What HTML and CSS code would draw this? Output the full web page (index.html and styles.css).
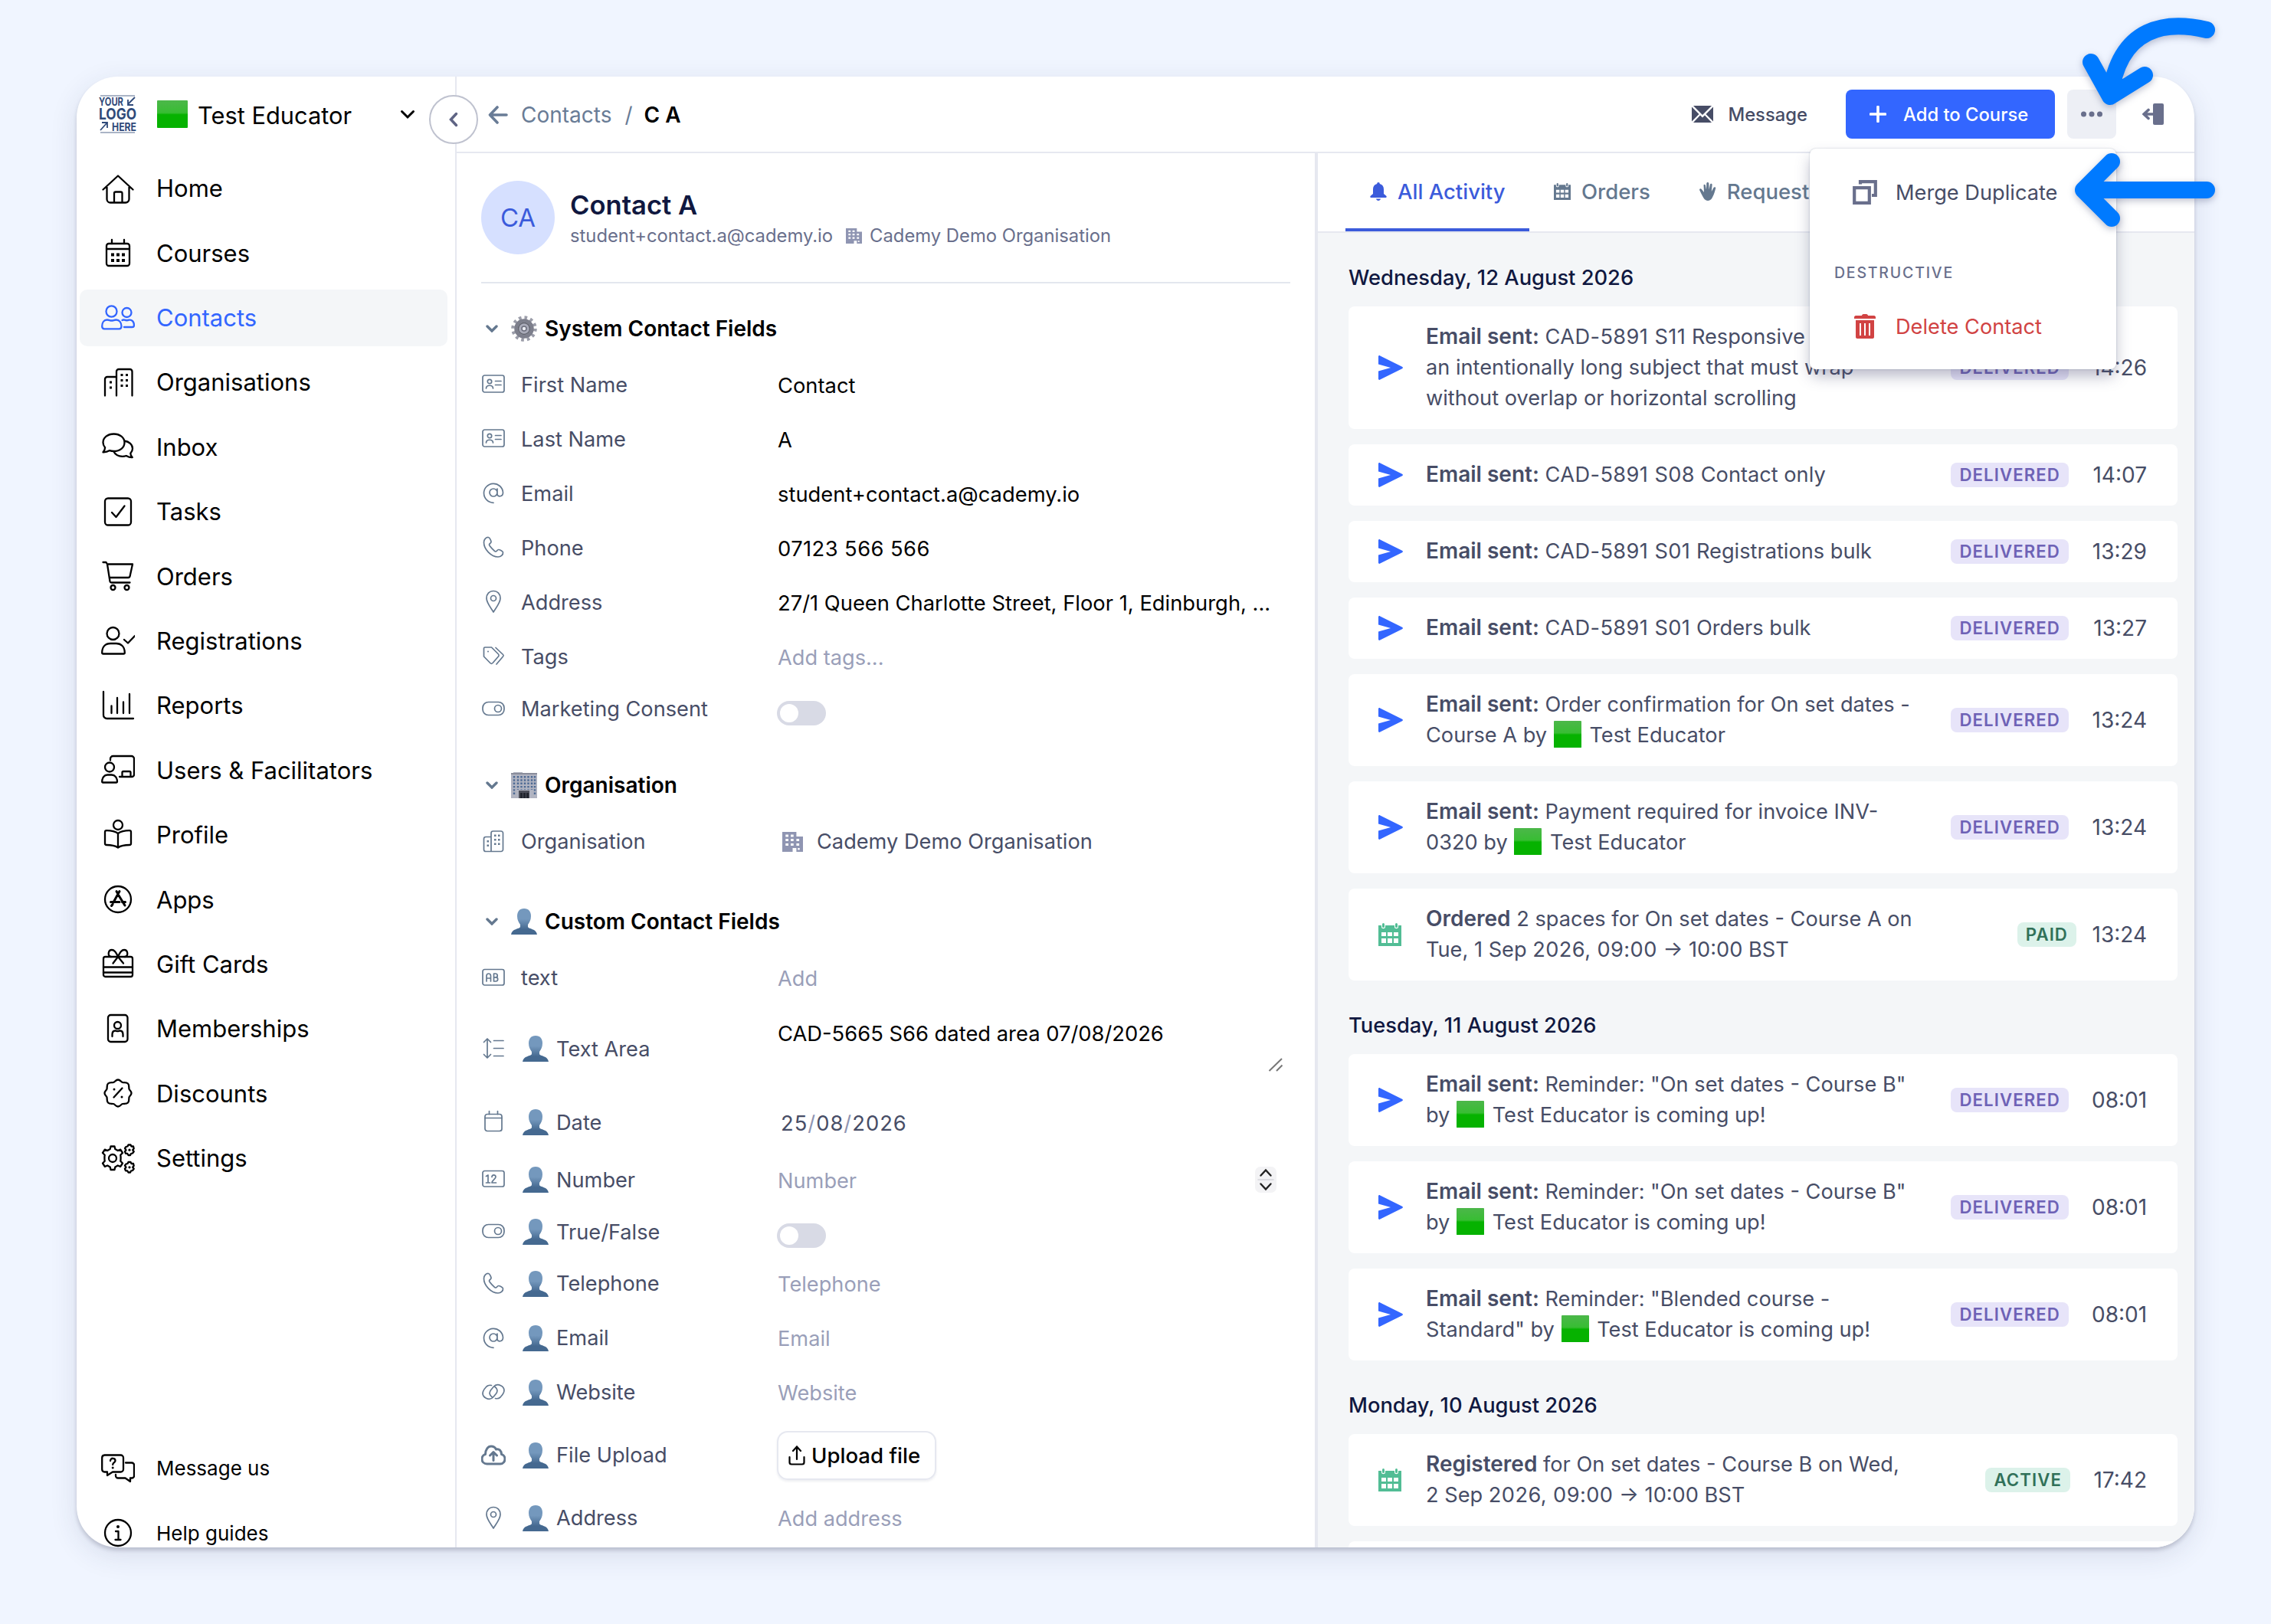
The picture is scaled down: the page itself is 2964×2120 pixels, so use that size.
FILE: index.html
```
<!DOCTYPE html>
<html lang="en">
<head>
    <meta charset="UTF-8">
    <meta name="viewport" content="width=device-width, initial-scale=1.0">
    <title>Contact A - Test Educator</title>
    <link rel="stylesheet" href="styles.css">
</head>
<body>
    <!-- Icon sprite -->
    <svg class="sprite" aria-hidden="true">
        <defs>
            <linearGradient id="green" x1="0" y1="0" x2="0" y2="1">
                <stop offset="0" stop-color="#4cb74a"/>
                <stop offset="0.45" stop-color="#38bd33"/>
                <stop offset="0.52" stop-color="#06b200"/>
                <stop offset="1" stop-color="#06b200"/>
            </linearGradient>
            <linearGradient id="blue" x1="0" y1="0" x2="0" y2="1">
                <stop offset="0.4" stop-color="#7498bd"/>
                <stop offset="0.8" stop-color="#456990"/>
            </linearGradient>
        </defs>

        <!-- Emoji -->
        <symbol id="e-square" viewBox="0 0 40 40" preserveAspectRatio="none"><rect width="40" height="40" rx="1" fill="url(#green)"/></symbol>
        <symbol id="e-person" viewBox="0 0 34 34">
            <path fill="url(#blue)" d="M17 0c6 0 9 4 9 10 0 5-2 8-4 11v3c1 3 11 2 12 10H0c1-8 11-7 12-10v-3c-2-3-4-6-4-11C8 4 11 0 17 0z"/>
        </symbol>
        <symbol id="e-gear" viewBox="0 0 34 34">
            <circle cx="17" cy="17" r="14.500" fill="none" stroke="#9b9da9" stroke-width="4.500" stroke-dasharray="3.600 4"/>
            <circle cx="17" cy="17" r="10.500" fill="#c3c5d0" stroke="#7d7f8c" stroke-width="4.500"/>
            <circle cx="17" cy="17" r="7.500" fill="#a9abb9" stroke="#62646f" stroke-width="1.500"/>
            <circle cx="17" cy="17" r="3" fill="#eceef4" stroke="#6b6d7b" stroke-width="1.500"/>
        </symbol>
        <symbol id="e-building" viewBox="0 0 34 34">
            <path fill="#b1b4c1" d="M3 0h12v1h19v33H0V1h3z"/>
            <path fill="#8a8d9b" d="M0 1h34v2H0z"/>
            <path stroke="#4e6a94" stroke-width="2.400" stroke-dasharray="2.400 1.900" d="M4 5v25M9 5v18M13.500 5v18M18 5v18M22.500 5v18M27 5v18M31 5v25"/>
            <path fill="#4c4e59" d="M10 24h14v10H10z"/>
            <path fill="#22252e" d="M12 27h3v7h-3zM16 27h3v7h-3zM20 27h3v7h-3z"/>
        </symbol>

        <!-- Sidebar icons -->
        <symbol id="i-home" viewBox="0 0 44 44"><path d="M2.500 23.500 22 5.500l19.500 18M7.500 20v16a4.500 4.500 0 0 0 4.500 4.500h20a4.500 4.500 0 0 0 4.500-4.500V20M17 40V28.500a2 2 0 0 1 2-2h6.500a2 2 0 0 1 2 2V40"/></symbol>
        <symbol id="i-courses" viewBox="0 0 44 44"><rect x="7" y="10" width="30" height="29" rx="3"/><path d="M7 17h30M14 5v5M30 5v5"/><path class="solid" d="M13 22.500h4v4h-4zM20 22.500h4v4h-4zM27 22.500h4v4h-4zM13 30h4v4h-4zM20 30h4v4h-4zM27 30h4v4h-4z"/></symbol>
        <symbol id="i-contacts" viewBox="0 0 44 44"><ellipse cx="13.500" cy="13.500" rx="7" ry="7.200"/><ellipse cx="33.500" cy="15" rx="6" ry="6"/><path d="M1.200 33c0-5 2.500-8.500 6.500-8.500 3 0 3.500 1 6 1s3-1 6-1c4 0 6.800 3.500 6.800 8.500 0 2-1 3.300-3 3.300H4.200c-2 0-3-1.300-3-3.300zM27.500 25c1-.6 2-.6 3-.3 2 .7 4 .7 6 0 3.500-.8 6.500 2.300 6.500 7 0 1.500-1 2.300-2.500 2.300H30"/></symbol>
        <symbol id="i-orgs" viewBox="0 0 44 44"><path d="M20 39.500V8a3 3 0 0 1 3-3h14.500a3 3 0 0 1 3 3v31.500M5 39.500V18a3 3 0 0 1 3-3h12"/><path class="solid" d="M25.500 11h3v3h-3zM32 11h3v3h-3zM25.500 18h3v3h-3zM32 18h3v3h-3zM25.500 25h3v3h-3zM32 25h3v3h-3zM11 20.500h3v3h-3zM11 27.500h3v3h-3z"/></symbol>
        <symbol id="i-inbox" viewBox="0 0 44 44"><path d="M16.500 5.500c8 0 14 4.800 14 11.300S24.500 28 16.500 28c-2 0-3.800-.3-5.300-.9-2.500 1.500-5.700 2.400-8.700 2.200 1.600-1.800 2.600-4 2.600-6-1.700-2-2.600-4-2.600-6.500 0-6.500 6-11.300 14-11.300zM30.500 14.500c6 1 10.500 4.800 10.500 10 0 2.500-1 4.600-2.700 6.300 0 2 .8 3.700 2.500 5.200-3 .2-5.500-.6-8-2-1.500.5-3.200.8-5 .8-5.500 0-9.500-2.500-11.500-6.500"/></symbol>
        <symbol id="i-tasks" viewBox="0 0 44 44"><rect x="5" y="4.500" width="34" height="35" rx="4"/><path d="m14 23 5.500 6 11-14.500"/></symbol>
        <symbol id="i-orders" viewBox="0 0 44 44"><path d="M2.500 4h4l1.500 2.500h33l-3.500 16c-.4 1-1 1.500-2 1.500H11.500M8 6.500 11.500 29c.2 1 .8 1.500 2 1.500h24"/><circle cx="15.500" cy="37" r="3"/><circle cx="33.500" cy="37" r="3"/></symbol>
        <symbol id="i-regs" viewBox="0 0 44 44"><ellipse cx="15.500" cy="12" rx="8" ry="8"/><path d="M1.200 37c0-8 4.500-12 11-12h7.600c6 0 11 4 11 12 0 1-.6 1.500-1.600 1.500H2.800c-1 0-1.600-.5-1.600-1.500zM30 20l5 4.500 9-9.500"/></symbol>
        <symbol id="i-reports" viewBox="0 0 44 44"><path d="M3 4v30.500a4.500 4.500 0 0 0 4.500 4.500H42M13.500 22.500V32M21 12v20M29 17.500V32M37 7v25"/></symbol>
        <symbol id="i-users" viewBox="0 0 44 44"><path d="M12 9.500V7.500a3.500 3.500 0 0 1 3.500-3.500h24a3.500 3.500 0 0 1 3.500 3.500V28a3 3 0 0 1-3 3H24M27.500 31v-5.500a1.500 1.500 0 0 1 1.500-1.500h8a1.500 1.500 0 0 1 1.500 1.500V31"/><circle cx="11" cy="18.500" r="6"/><path d="M1.200 37.500c0-5.500 3-9 7-9h5.600c4 0 7.200 3.500 7.200 9 0 .6-.4 1-1 1H2.200c-.6 0-1-.4-1-1z"/></symbol>
        <symbol id="i-profile" viewBox="0 0 44 44"><circle cx="22" cy="9" r="6"/><path d="M22 20c-4-3-9-3.800-15-3.800a2 2 0 0 0-2 2V33a2 2 0 0 0 2 2c6 0 11 .8 15 3.500 4-2.700 9-3.500 15-3.500a2 2 0 0 0 2-2V18.200a2 2 0 0 0-2-2c-6 0-11 .8-15 3.800zM22 20v18"/></symbol>
        <symbol id="i-apps" viewBox="0 0 44 44"><circle cx="22" cy="22" r="17"/><path class="thick" d="M22 15 16 26M24 11.500 22 15M20 11.500 22 15M23 17l8 13M12.500 25.500H24M27.500 25.500h4M15 28.500 13.500 30.500"/></symbol>
        <symbol id="i-gift" viewBox="0 0 44 44"><path d="M22 13c-2-5-4-9-8-9-5 0-6 8-1 9M22 13c2-5 4-9 8-9 5 0 6 8 1 9M22 13l-6.500 8.500M22 13l7 8.500M3 26.500h38M3 33.500h38"/><rect x="3" y="13" width="38" height="26" rx="2.500"/></symbol>
        <symbol id="i-members" viewBox="0 0 44 44"><rect x="9" y="4" width="25.500" height="35" rx="3.500"/><circle cx="21.500" cy="17.500" r="4.500"/><path d="M14.500 32v-2.500c0-3 1.500-5 4-5 1.500 0 1.500.7 3 .7s1.500-.7 3-.7c2.500 0 4 2 4 5V32"/></symbol>
        <symbol id="i-discounts" viewBox="0 0 44 44"><path d="M22 4.500c3 0 4 3 6 3.500s5-.5 7 1.500 1 5 1.500 7S39.500 19 39.500 22s-2.500 3.500-3 5.500.5 5-1.500 7-5 1-7 1.500-3 3.500-6 3.500-4-3-6-3.500-5 .5-7-1.500-1-5-1.500-7-3-2.500-3-5.500 2.500-3.500 3-5.500-.5-5 1.500-7 5-1 7-1.500 3-3.500 6-3.500zM16.500 27.500l11-12"/><circle class="solid" cx="17" cy="17" r="1.500"/><circle class="solid" cx="27" cy="27" r="1.500"/></symbol>
        <symbol id="i-settings" viewBox="0 0 44 44"><path d="M12.500 6.500h5l.8 3.600 3.400 1.900 3.500-1.300 2.800 4.300-2.700 2.700c.4 2.800.4 5.200 0 8l2.700 2.800-2.800 4.300-3.500-1.300-3.400 1.900-.8 3.600h-5l-.8-3.600-3.400-1.900-3.500 1.300-2.800-4.300 2.700-2.800c-.4-2.800-.4-5.200 0-8l-2.700-2.700 2.800-4.300 3.500 1.300 3.400-1.900z"/><circle cx="15" cy="22" r="5"/><path d="M35.500 4.500h3l1 2h2.500l.7 2.700-1.500 2 1.500 2L41 15.500l-2 .5-1 2h-2.500l-1.200-2-2.300-.3-1-2.400 1.500-2-1.500-2.300 1.500-2 2-.5zM35.500 27h3l1 2h2.500l.7 2.700-1.500 2 1.500 2L41 38l-2 .5-1 2h-2.500l-1.200-2-2.300-.3-1-2.400 1.500-2-1.500-2.300 1.500-2 2-.5z"/><circle class="solid" cx="37" cy="11.200" r="1.600"/><circle class="solid" cx="37" cy="33.800" r="1.600"/></symbol>
        <symbol id="i-message" viewBox="0 0 44 44"><path d="M4.500 4.500h21a3.500 3.500 0 0 1 3.500 3.500v15a3.500 3.500 0 0 1-3.500 3.500H15l-7 4.500v-4.500H4.500A3.500 3.500 0 0 1 1.200 23V8a3.500 3.500 0 0 1 3.300-3.500zM32 14.500h8a3 3 0 0 1 3 3v14a3 3 0 0 1-3 3h-2v4.500l-6.500-4.500H22a3 3 0 0 1-3-3V30M12 12c0-4.500 6.500-4 6.500-.3 0 2.300-3.300 2.500-3.300 5.300"/><circle class="solid" cx="15.200" cy="21" r="1.500"/></symbol>
        <symbol id="i-info" viewBox="0 0 44 44"><circle cx="22" cy="22" r="17"/><path d="M19 20h3.500v11M18.500 31h7"/><circle class="solid" cx="22" cy="14" r="2"/></symbol>

        <!-- Field icons -->
        <symbol id="f-card" viewBox="0 0 32 32"><rect x="2" y="5" width="28" height="22" rx="2.500"/><circle cx="11" cy="13" r="2.700"/><path d="M6.500 22c0-5 9-5 9 0M18.500 12.500H26M18.500 17.500H26"/></symbol>
        <symbol id="f-at" viewBox="0 0 32 32"><path d="M21 16a5 5 0 1 1-10 0 5 5 0 0 1 10 0zm0-5v7c0 4 7.500 4 7.500-2A12.500 12.500 0 1 0 16 29.300"/></symbol>
        <symbol id="f-phone" viewBox="0 0 32 32"><path d="M9.500 3.500c-3-.3-6 2.500-6 6.500 0 9 9.500 19 18.500 19 4 0 6.800-3 6.500-6-.2-1.500-4-3.500-6-3.500-1.500 0-2 2.500-3.500 2.500S10.500 14.500 10.500 13s2.500-2 2.500-3.500c0-2-2-5.800-3.500-6z"/></symbol>
        <symbol id="f-pin" viewBox="0 0 32 32"><path d="M16 2.500c5.500 0 9 4 9 9.500 0 6-5.500 12-9 18-3.500-6-9-12-9-18 0-5.500 3.500-9.500 9-9.500z"/><circle cx="16" cy="12" r="3.500"/></symbol>
        <symbol id="f-tags" viewBox="0 0 32 32"><path d="M5 5h8.500l8.500 8.500c1.500 1.500 1.500 2.500 0 4L15 25.500c-1.200 1.200-2 1.200-3.200 0L3.500 17V6.500C3.500 5.500 4 5 5 5zM19 5.500l9.500 9c1 1 1 1.500 0 2.500L20 27"/><circle class="solid" cx="9" cy="10.500" r="1"/></symbol>
        <symbol id="f-toggle" viewBox="0 0 32 32"><rect x="2" y="7.500" width="28" height="17" rx="7.500"/><circle cx="22" cy="16" r="4.500"/></symbol>
        <symbol id="f-org" viewBox="0 0 32 32"><path d="M13 29.500V5.500a2.500 2.500 0 0 1 2.500-2.500H26a2.500 2.500 0 0 1 2.500 2.500v21.500a2.500 2.500 0 0 1-2.500 2.500H6A2.500 2.500 0 0 1 3.500 27V13A2.500 2.500 0 0 1 6 10.500h7"/><path class="solid" d="M17 7.500h2.500v2.500H17zM22 7.500h2.500v2.500H22zM17 13h2.500v2.500H17zM22 13h2.500v2.500H22zM17 18.500h2.500v2.500H17zM22 18.500h2.500v2.500H22zM7.500 15H10v2.500H7.500zM7.500 20.500H10v2.500H7.500z"/></symbol>
        <symbol id="f-text" viewBox="0 0 32 32"><rect x="2" y="5.500" width="28" height="20.500" rx="2.500"/><path d="M7 21v-7c0-4 5.500-4 5.500 0v7M7 17h5.500M16.500 11v10h2.500c3.500 0 3.500-5 .5-5.200 2.500-.3 2.300-4.800-.7-4.800zM16.500 15.800h3"/></symbol>
        <symbol id="f-number" viewBox="0 0 32 32"><rect x="2" y="5.500" width="28" height="20.500" rx="2.500"/><path d="M6.500 12.500 9 11v10M6.500 21h5M14 13.500c0-3.500 5-3.300 5-.3 0 3-5 4.300-5 7.800h5.500"/></symbol>
        <symbol id="f-area" viewBox="0 0 32 32"><path d="M8 4.500v24M3.500 8.500l4.500-4.500 4.500 4.500M3.500 24.500l4.500 4.500 4.500-4.500M16.500 6.500h12.500M16.500 16.500h12.500M16.500 26.500h12.500"/></symbol>
        <symbol id="f-date" viewBox="0 0 32 32"><rect x="5" y="6.500" width="22" height="22" rx="3"/><path d="M5 11.500h22M10.500 2.500v4M21.500 2.500v4"/></symbol>
        <symbol id="f-link" viewBox="0 0 32 32"><path d="M14 22.500c-3-2-4-5.500-1.500-8.800l3.500-4.200c5-6 16-1 13.500 7-.7 2-2.500 4.500-4.500 6.500-2 1.800-4.500 2-6.500 1.500M18 9.500c3 2 4 5.500 1.500 8.800L16 22.500c-5 6-16 1-13.500-7C3.200 13.500 5 11 7 9c2-1.800 4.500-2 6.500-1.500"/></symbol>
        <symbol id="f-cloud" viewBox="0 0 32 32"><path class="thick" d="M7.500 28c-4 0-6.500-3-6.500-6.500 0-3 2-5.500 4.500-6C5.500 9 9 5 13 5c3 0 5.300 1.500 6.500 4 4-1 7 2 7 6.500 2.500.5 4.500 3 4.500 6S29 28 25 28zM16 23.500V13M11.500 17l4.500-4.500 4.500 4.500"/></symbol>

        <!-- Solid icons -->
        <symbol id="s-building" viewBox="2 0 22 26" preserveAspectRatio="none"><path d="M2 0h15v6h7v20h-7v-5h-4v5H2zm3.500 3.500v3h3v-3zm5.500 0v3h3v-3zM5.500 9v3h3V9zm5.500 0v3h3V9zm6 0v3h3V9zM5.500 15v3h3v-3zm5.500 0v3h3v-3zm6 0v3h3v-3zM18.500 21v2.500h2V21z" fill-rule="evenodd"/></symbol>
        <symbol id="s-send" viewBox="0 0 32 32"><path d="M0 1.500C0 .3 1.200-.3 2.300.4L31 14.700c1.200.7 1.200 1.900 0 2.600L2.300 31.600C1.200 32.300 0 31.700 0 30.500V20.500L16 16 0 11.500z"/></symbol>
        <symbol id="s-calendar" viewBox="0 0 30 30"><path fill-rule="evenodd" d="M0 3h4v2c0 3 5 3 5 0V3h12v2c0 3 5 3 5 0V3h4v27H0zm4 9v5h6v-5zm8 0v5h6v-5zm8 0v5h6v-5zM4 20v6h6v-6zm8 0v6h6v-6zm8 0v6h6v-6z"/><rect x="5" y="0" width="3" height="6" rx="1.500"/><rect x="22" y="0" width="3" height="6" rx="1.500"/></symbol>
        <symbol id="s-bell" viewBox="0 0 22 24"><path d="M11 0c1.200 0 1.800.8 1.800 2 3.500.8 5.200 3.500 5.200 7v6l3 2.500c1.500 1.200.5 2.500-.8 2.500H1.800C.5 20-.5 18.700 1 17.500L4 15V9c0-3.500 1.700-6.200 5.200-7 0-1.200.6-2 1.800-2zM8 21.500h6c-.5 3.300-5.500 3.300-6 0z"/></symbol>
        <symbol id="s-hand" viewBox="0 0 22 24"><path d="M5.500 3.500c.7-1.200 2-1 2.300.2L9 9.500l.3-8c.1-2 2.900-2 3 0l.3 8 1.300-6.500c.4-1.800 2.800-1.500 2.700.3L15.800 12l2.700-5c.8-1.500 3.100-.8 2.700.8-1.200 5-2.700 9.200-4.700 12.700-2.500 4.500-8.500 4.500-11 0C4 18 1.500 13 .3 10.500c-.8-1.700 1.200-3 2.500-1.500L6 13z"/></symbol>
    </svg>

    <div class="window">
        <aside class="sidebar">
            <div class="account">
                <svg class="logo" viewBox="0 0 50 50">
                    <path d="M2 1h45M2 49h45" stroke="#8e9cb4" stroke-width="1.500"/>
                    <text x="0" y="14" font-size="14" textLength="32" lengthAdjust="spacingAndGlyphs">YOUR</text>
                    <text x="0" y="32" font-size="20" textLength="49" lengthAdjust="spacingAndGlyphs">LOGO</text>
                    <text x="17" y="46.500" font-size="15" textLength="32" lengthAdjust="spacingAndGlyphs">HERE</text>
                    <path d="M47 3 38 12M38 6v7h7M2 46l9-10M4 36h7v7" stroke="#2f4a7a" stroke-width="1.800" fill="none"/>
                </svg>
                <svg class="account-flag"><use href="#e-square"/></svg>
                <span class="account-name">Test Educator</span>
                <svg class="account-caret" viewBox="0 0 20 14"><path d="m2.500 3.500 7.500 7.500 7.500-7.500"/></svg>
            </div>

            <nav class="nav">
                <a class="nav-item"><svg><use href="#i-home"/></svg>Home</a>
                <a class="nav-item"><svg><use href="#i-courses"/></svg>Courses</a>
                <a class="nav-item active"><svg><use href="#i-contacts"/></svg>Contacts</a>
                <a class="nav-item"><svg><use href="#i-orgs"/></svg>Organisations</a>
                <a class="nav-item"><svg><use href="#i-inbox"/></svg>Inbox</a>
                <a class="nav-item"><svg><use href="#i-tasks"/></svg>Tasks</a>
                <a class="nav-item"><svg><use href="#i-orders"/></svg>Orders</a>
                <a class="nav-item"><svg><use href="#i-regs"/></svg>Registrations</a>
                <a class="nav-item"><svg><use href="#i-reports"/></svg>Reports</a>
                <a class="nav-item"><svg><use href="#i-users"/></svg>Users &amp; Facilitators</a>
                <a class="nav-item"><svg><use href="#i-profile"/></svg>Profile</a>
                <a class="nav-item"><svg><use href="#i-apps"/></svg>Apps</a>
                <a class="nav-item"><svg><use href="#i-gift"/></svg>Gift Cards</a>
                <a class="nav-item"><svg><use href="#i-members"/></svg>Memberships</a>
                <a class="nav-item"><svg><use href="#i-discounts"/></svg>Discounts</a>
                <a class="nav-item"><svg><use href="#i-settings"/></svg>Settings</a>
            </nav>

            <nav class="nav nav-help">
                <a class="nav-item small"><svg><use href="#i-message"/></svg>Message us</a>
                <a class="nav-item small"><svg><use href="#i-info"/></svg>Help guides</a>
            </nav>
        </aside>

        <div class="main">
            <header class="topbar">
                <svg class="back" viewBox="0 0 26 24"><path d="M12 2 2.500 12l9.500 10M3 12h21"/></svg>
                <span class="crumb">Contacts</span>
                <span class="crumb-sep">/</span>
                <span class="crumb-current">C A</span>

                <div class="actions">
                    <button class="btn btn-message">
                        <svg viewBox="0 0 28 22"><path d="M2 0h24L14 12zM0 1.500 9.500 11 0 20.500zM28 1.500 18.500 11 28 20.500zM2 22l9-9.500 3 3 3-3 9 9.500z"/></svg>
                        Message
                    </button>
                    <button class="btn btn-primary">
                        <svg viewBox="0 0 22 22"><path d="M11 1.500v19M1.500 11h19"/></svg>
                        Add to Course
                    </button>
                    <button class="btn btn-more">
                        <svg viewBox="0 0 28 8"><circle cx="3.500" cy="4" r="3.500"/><circle cx="14" cy="4" r="3.500"/><circle cx="24.500" cy="4" r="3.500"/></svg>
                    </button>
                    <svg class="exit" viewBox="0 0 28 28"><rect x="14" width="14" height="28" rx="2"/><path d="M8 8.500 2 14l6 5.500M2.500 14H15"/></svg>
                </div>
            </header>

            <div class="columns">
                <section class="details">
                    <div class="profile">
                        <div class="avatar">CA</div>
                        <div class="profile-text">
                            <h1>Contact A</h1>
                            <p>student+contact.a@cademy.io <svg><use href="#s-building"/></svg> <span>Cademy Demo Organisation</span></p>
                        </div>
                    </div>

                    <div class="group group-system">
                        <h2><svg class="caret" viewBox="0 0 16 10"><path d="m2 2 6 6 6-6"/></svg><svg class="emoji"><use href="#e-gear"/></svg>System Contact Fields</h2>
                        <div class="field"><svg class="field-icon"><use href="#f-card"/></svg><div class="label">First Name</div><div class="value">Contact</div></div>
                        <div class="field"><svg class="field-icon"><use href="#f-card"/></svg><div class="label">Last Name</div><div class="value">A</div></div>
                        <div class="field"><svg class="field-icon"><use href="#f-at"/></svg><div class="label">Email</div><div class="value">student+contact.a@cademy.io</div></div>
                        <div class="field"><svg class="field-icon"><use href="#f-phone"/></svg><div class="label">Phone</div><div class="value"><span class="digits">07123 566 566</span></div></div>
                        <div class="field"><svg class="field-icon"><use href="#f-pin"/></svg><div class="label">Address</div><div class="value">27/1 Queen Charlotte Street, Floor 1, Edinburgh, ...</div></div>
                        <div class="field"><svg class="field-icon"><use href="#f-tags"/></svg><div class="label">Tags</div><div class="value empty">Add tags...</div></div>
                        <div class="field field-toggle"><svg class="field-icon"><use href="#f-toggle"/></svg><div class="label">Marketing Consent</div><div class="toggle"></div></div>
                    </div>

                    <div class="group group-org">
                        <h2><svg class="caret" viewBox="0 0 16 10"><path d="m2 2 6 6 6-6"/></svg><svg class="emoji"><use href="#e-building"/></svg>Organisation</h2>
                        <div class="field"><svg class="field-icon"><use href="#f-org"/></svg><div class="label">Organisation</div><div class="value org-value"><svg><use href="#s-building"/></svg>Cademy Demo Organisation</div></div>
                    </div>

                    <div class="group group-custom">
                        <h2><svg class="caret" viewBox="0 0 16 10"><path d="m2 2 6 6 6-6"/></svg><svg class="emoji"><use href="#e-person"/></svg>Custom Contact Fields</h2>
                        <div class="field"><svg class="field-icon"><use href="#f-text"/></svg><div class="label">text</div><div class="value empty">Add</div></div>
                        <div class="field field-area"><svg class="field-icon"><use href="#f-area"/></svg><div class="label"><svg class="emoji"><use href="#e-person"/></svg>Text Area</div><div class="value area">CAD-5665 S66 dated area 07/08/2026<svg class="grip" viewBox="0 0 20 18"><path d="M1.500 17 18 1M11 17l7.500-7.500"/></svg></div></div>
                        <div class="field field-date"><svg class="field-icon"><use href="#f-date"/></svg><div class="label"><svg class="emoji"><use href="#e-person"/></svg>Date</div><div class="value date">25<i>/</i>08<i>/</i>2026</div></div>
                        <div class="field field-number"><svg class="field-icon"><use href="#f-number"/></svg><div class="label"><svg class="emoji"><use href="#e-person"/></svg>Number</div><div class="value empty">Number</div><svg class="spinner" viewBox="0 0 28 34"><rect width="28" height="34" rx="7"/><path class="bar" d="M4 17h20"/><path d="m7.500 11.500 6.500-7 6.500 7M7.500 22.500l6.500 7 6.500-7"/></svg></div>
                        <div class="field field-bool"><svg class="field-icon"><use href="#f-toggle"/></svg><div class="label"><svg class="emoji"><use href="#e-person"/></svg>True/False</div><div class="toggle"></div></div>
                        <div class="field"><svg class="field-icon"><use href="#f-phone"/></svg><div class="label"><svg class="emoji"><use href="#e-person"/></svg>Telephone</div><div class="value empty">Telephone</div></div>
                        <div class="field"><svg class="field-icon"><use href="#f-at"/></svg><div class="label"><svg class="emoji"><use href="#e-person"/></svg>Email</div><div class="value empty">Email</div></div>
                        <div class="field"><svg class="field-icon"><use href="#f-link"/></svg><div class="label"><svg class="emoji"><use href="#e-person"/></svg>Website</div><div class="value empty">Website</div></div>
                        <div class="field field-file"><svg class="field-icon"><use href="#f-cloud"/></svg><div class="label"><svg class="emoji"><use href="#e-person"/></svg>File Upload</div><button class="upload"><svg viewBox="0 0 22 26"><path d="M11 18V2M6 7l5-5.500L16 7M1.500 15v7a2.500 2.500 0 0 0 2.500 2.500h14a2.500 2.500 0 0 0 2.500-2.500v-7"/></svg>Upload file</button></div>
                        <div class="field"><svg class="field-icon"><use href="#f-pin"/></svg><div class="label"><svg class="emoji"><use href="#e-person"/></svg>Address</div><div class="value empty">Add address</div></div>
                    </div>
                </section>

                <section class="activity">
                    <div class="tabs">
                        <a class="tab active"><svg><use href="#s-bell"/></svg>All Activity</a>
                        <a class="tab"><svg><use href="#s-calendar"/></svg>Orders</a>
                        <a class="tab"><svg><use href="#s-hand"/></svg>Requests</a>
                    </div>

                    <div class="feed">
                        <h3>Wednesday, 12 August 2026</h3>
                        <div class="card"><svg class="send"><use href="#s-send"/></svg><p><b>Email sent:</b> <span class="digits">CAD-5891 S11</span> Responsive check<br>an intentionally long subject that must wrap<br>without overlap or horizontal scrolling</p><span class="badge">DELIVERED</span><time>14:26</time></div>
                        <div class="card"><svg class="send"><use href="#s-send"/></svg><p><b>Email sent:</b> <span class="digits">CAD-5891 S08</span> Contact only</p><span class="badge">DELIVERED</span><time>14:07</time></div>
                        <div class="card"><svg class="send"><use href="#s-send"/></svg><p><b>Email sent:</b> <span class="digits">CAD-5891 S01</span> Registrations bulk</p><span class="badge">DELIVERED</span><time>13:29</time></div>
                        <div class="card"><svg class="send"><use href="#s-send"/></svg><p><b>Email sent:</b> <span class="digits">CAD-5891 S01</span> Orders bulk</p><span class="badge">DELIVERED</span><time>13:27</time></div>
                        <div class="card"><svg class="send"><use href="#s-send"/></svg><p><b>Email sent:</b> Order confirmation for On set dates -<br>Course A by <svg class="flag"><use href="#e-square"/></svg> Test Educator</p><span class="badge">DELIVERED</span><time>13:24</time></div>
                        <div class="card"><svg class="send"><use href="#s-send"/></svg><p><b>Email sent:</b> Payment required for invoice INV-<br>0320 by <svg class="flag"><use href="#e-square"/></svg> Test Educator</p><span class="badge">DELIVERED</span><time>13:24</time></div>
                        <div class="card"><svg class="booked"><use href="#s-calendar"/></svg><p><b>Ordered</b> 2 spaces for On set dates - Course A on<br>Tue, 1 Sep <span class="digits">2026, 09:00</span> → 10:00 BST</p><span class="badge paid">PAID</span><time>13:24</time></div>

                        <h3>Tuesday, 11 August 2026</h3>
                        <div class="card"><svg class="send"><use href="#s-send"/></svg><p><b>Email sent:</b> Reminder: "On set dates - Course B"<br>by <svg class="flag"><use href="#e-square"/></svg> Test Educator is coming up!</p><span class="badge">DELIVERED</span><time>08:01</time></div>
                        <div class="card"><svg class="send"><use href="#s-send"/></svg><p><b>Email sent:</b> Reminder: "On set dates - Course B"<br>by <svg class="flag"><use href="#e-square"/></svg> Test Educator is coming up!</p><span class="badge">DELIVERED</span><time>08:01</time></div>
                        <div class="card"><svg class="send"><use href="#s-send"/></svg><p><b>Email sent:</b> Reminder: "Blended course -<br>Standard" by <svg class="flag"><use href="#e-square"/></svg> Test Educator is coming up!</p><span class="badge">DELIVERED</span><time>08:01</time></div>

                        <h3>Monday, 10 August 2026</h3>
                        <div class="card"><svg class="booked"><use href="#s-calendar"/></svg><p><b>Registered</b> for On set dates - Course B on Wed,<br>2 Sep <span class="digits">2026, 09:00</span> → 10:00 BST</p><span class="badge active">ACTIVE</span><time>17:42</time></div>
                        <div class="card"></div>
                    </div>
                </section>
            </div>
        </div>

        <button class="collapse"><svg viewBox="0 0 12 20"><path d="M9.500 2.500 2.500 10l7 7.500"/></svg></button>
    </div>

    <div class="menu">
        <a class="menu-item">
            <svg viewBox="0 0 32 32"><path d="M10 5.500V2.200h19.800V20H25M2.200 10.200h19.600v19.600H2.200z"/></svg>
            Merge Duplicate
        </a>
        <div class="menu-title">DESTRUCTIVE</div>
        <a class="menu-item danger">
            <svg viewBox="0 0 32 32"><path fill-rule="evenodd" d="M12 2c0-3 8-3 8 0h8c1 0 2 1 2 2v2H2V4c0-1 1-2 2-2zM4 8h24v22c0 1-1 2-2 2H6c-1 0-2-1-2-2zm5 4v16h2V12zm6 0v16h2V12zm6 0v16h2V12z"/></svg>
            Delete Contact
        </a>
    </div>

    <!-- Annotation arrows -->
    <svg class="arrows" viewBox="0 0 220 300">
        <path d="M180 39C130 27 66 32 54 126M29 81l25 45 45-28"/>
        <path d="M180 248H20M56 211 19 248l37 37"/>
    </svg>
</body>
</html>
```

FILE: styles.css
```
* {
    margin: 0;
    padding: 0;
    box-sizing: border-box;
}

body {
    font-family: Inter, "Liberation Sans", sans-serif;
    font-size: 27.2px;
    background: #f0f5ff;
    width: 2964px;
    height: 2120px;
    padding: 100px;
    overflow: hidden;
    color: #000;
}

button {
    font-family: inherit;
    border: none;
    background: none;
}

.sprite {
    position: absolute;
    width: 0;
    height: 0;
}

.window {
    position: relative;
    display: flex;
    width: 2764px;
    height: 1920px;
    background: #fff;
    border-radius: 54px;
    box-shadow: 0 4px 5px rgba(30, 35, 60, 0.18), 0 10px 36px rgba(40, 50, 90, 0.12);
}

/* Sidebar */
.sidebar {
    display: flex;
    flex-direction: column;
    width: 496px;
    height: 1920px;
    padding: 0 10px 0 4px;
    border-right: 2px solid #e6e8f0;
    border-radius: 54px 0 0 54px;
    overflow: hidden;
    flex-shrink: 0;
}

.account {
    display: flex;
    align-items: center;
    height: 98px;
    padding-left: 25px;
    margin-bottom: 10.8px;
    flex-shrink: 0;
}

.logo {
    width: 50px;
    height: 50px;
    margin-right: 26px;
    overflow: visible;
}

.logo text {
    font-weight: 700;
    fill: #2f4a7a;
}

.account-flag {
    width: 40px;
    height: 36px;
    margin-right: 13px;
}

.account-name {
    font-size: 30.8px;
    padding-top: 2px;
}

.account-caret {
    width: 20px;
    height: 14px;
    margin-left: auto;
    margin-right: 42px;
    fill: none;
    stroke: #000;
    stroke-width: 3;
    stroke-linecap: round;
}

.nav {
    display: flex;
    flex-direction: column;
    gap: 10.4px;
}

.nav-item {
    display: flex;
    align-items: center;
    height: 74px;
    width: 480px;
    padding-left: 28px;
    border-radius: 10px;
    font-size: 31px;
    flex-shrink: 0;
}

.nav-item svg {
    width: 44px;
    height: 44px;
    margin-right: 28px;
    fill: none;
    stroke: currentColor;
    stroke-width: 2.3;
    stroke-linecap: round;
    stroke-linejoin: round;
}

.nav-item.active {
    background: #f4f6f8;
    color: #3366ff;
}

.nav-item.small {
    font-size: 26px;
}

.nav-help {
    margin-top: 331px;
}

.solid {
    fill: currentColor;
    stroke: none;
}

.thick {
    stroke-width: 3;
}

.collapse {
    position: absolute;
    left: 460px;
    top: 24px;
    width: 64px;
    height: 64px;
    display: flex;
    align-items: center;
    justify-content: center;
    border: 2px solid #bfc2cf;
    border-radius: 50%;
    background: #fff;
}

.collapse svg {
    width: 12px;
    height: 20px;
    fill: none;
    stroke: #5f6484;
    stroke-width: 3.5;
    stroke-linecap: round;
}

/* Top bar */
.main {
    flex: 1;
    display: flex;
    flex-direction: column;
    min-width: 0;
}

.topbar {
    display: flex;
    align-items: center;
    height: 100px;
    padding-left: 41px;
    border-bottom: 2px solid #e6e8f0;
    flex-shrink: 0;
}

.back {
    width: 26px;
    height: 24px;
    margin: 2px 17px 0 0;
    fill: none;
    stroke: #697c96;
    stroke-width: 3.6;
    stroke-linecap: round;
    stroke-linejoin: round;
}

.crumb,
.crumb-sep,
.crumb-current {
    padding-top: 2px;
    font-size: 28px;
    color: #697c96;
}

.crumb-sep {
    margin: 0 15px 0 17px;
}

.crumb-current {
    font-weight: 600;
    color: #000;
}

.actions {
    display: flex;
    align-items: center;
    margin-left: auto;
    margin-right: 40px;
}

.btn {
    display: flex;
    align-items: center;
    height: 64px;
    border-radius: 8px;
    font-size: 23.8px;
    font-weight: 500;
}

.btn-message {
    color: #474d66;
    margin-right: 50px;
}

.btn-message svg {
    width: 28px;
    height: 22px;
    margin-right: 19px;
    fill: #474d66;
}

.btn-primary {
    width: 273px;
    padding-left: 31px;
    background: #3366ff;
    color: #fff;
    margin-right: 16px;
}

.btn-primary svg {
    width: 22px;
    height: 22px;
    margin-right: 22px;
    stroke: #fff;
    stroke-width: 3.6;
    stroke-linecap: round;
}

.btn-more {
    width: 64px;
    justify-content: center;
    background: #edeff5;
    margin-right: 34px;
}

.btn-more svg {
    width: 28px;
    height: 8px;
    fill: #696f8c;
}

.exit {
    width: 28px;
    height: 28px;
    fill: #696f8c;
}

.exit path {
    fill: none;
    stroke: #696f8c;
    stroke-width: 3.6;
    stroke-linecap: round;
}

.columns {
    flex: 1;
    display: flex;
    min-height: 0;
}

/* Contact details */
.details {
    width: 1124px;
    padding: 36px 32px 0;
    border-right: 4px solid #e6e8f0;
    flex-shrink: 0;
    height: 1820px;
    overflow: hidden;
}

.profile {
    display: flex;
    height: 134px;
    border-bottom: 2px solid #e3e7ee;
}

.avatar {
    width: 96px;
    height: 96px;
    line-height: 96px;
    border-radius: 50%;
    background: #d6e0ff;
    color: #3b5bdb;
    font-size: 33px;
    text-align: center;
    margin-right: 20px;
}

.profile-text h1 {
    font-size: 34.6px;
    font-weight: 600;
    line-height: 42px;
    color: #101840;
    padding-top: 10px;
}

.profile-text p {
    display: flex;
    align-items: center;
    font-size: 23.8px;
    line-height: 40px;
    color: #696f8c;
}

.profile-text p svg {
    width: 21px;
    height: 20px;
    margin: 0 10px 0 17px;
    fill: #8f95b2;
}

.group h2 {
    display: flex;
    align-items: center;
    height: 50px;
    margin-bottom: 13px;
    padding-left: 6px;
    font-size: 28px;
    font-weight: 600;
}

.group-system {
    padding-top: 33.5px;
}

.group-org {
    padding-top: 41.7px;
}

.group-custom {
    padding-top: 44px;
}

.caret {
    width: 16px;
    height: 10px;
    margin-right: 17px;
    fill: none;
    stroke: #64788f;
    stroke-width: 3.4;
    stroke-linecap: round;
}

.emoji {
    width: 34px;
    height: 34px;
}

.group h2 .emoji {
    margin-right: 10px;
}

.field {
    display: flex;
    align-items: center;
    height: 71px;
}

.field-icon {
    width: 32px;
    height: 32px;
    margin: -2px 20px 0 0;
    fill: none;
    stroke: #64788f;
    stroke-width: 1.7;
    color: #64788f;
    stroke-linecap: round;
    stroke-linejoin: round;
}

.label {
    display: flex;
    align-items: center;
    width: 334px;
    color: #474d66;
}

.label .emoji {
    margin: 0 10px 0 2px;
}

.value {
    padding-top: 2px;
    padding-left: 1px;
    font-size: 27.35px;
    white-space: nowrap;
}

.digits {
    letter-spacing: 0.42px;
}

.value.empty {
    color: #9a9fb9;
    font-size: 27.2px;
}

.org-value {
    display: flex;
    align-items: center;
    color: #474d66;
    font-size: 27.2px;
    padding: 0 0 0 7px;
}

.org-value svg {
    width: 27px;
    height: 26px;
    margin-right: 18px;
    fill: #8f95b2;
}

.toggle {
    width: 64px;
    height: 32px;
    margin-top: 10px;
    padding: 4px;
    border-radius: 16px;
    background: #d8dae5;
}

.toggle::before {
    content: "";
    display: block;
    width: 24px;
    height: 24px;
    border-radius: 50%;
    background: #fff;
}

.field-toggle {
    height: 66px;
}

.field-area {
    height: 114px;
}

.area {
    position: relative;
    width: 664px;
    height: 76px;
}

.grip {
    position: absolute;
    right: 3px;
    bottom: 8px;
    width: 20px;
    height: 18px;
    stroke: #777;
    stroke-width: 2;
}

.field-date {
    height: 78px;
}

.date {
    padding-left: 5px;
    color: #474d66;
    letter-spacing: 1px;
}

.date i {
    font-style: normal;
    color: #8f95b2;
}

.field-number {
    height: 72px;
}

.spinner {
    width: 28px;
    height: 34px;
    margin-left: auto;
    margin-right: 18px;
    fill: none;
    stroke: #222;
    stroke-width: 2.4;
    stroke-linecap: round;
}

.spinner rect {
    fill: #f3f3f5;
    stroke: none;
}

.spinner .bar {
    stroke: #d5d5da;
    stroke-width: 1.5;
}

.field-bool {
    height: 64px;
}

.field-file {
    height: 93px;
}

.upload {
    display: flex;
    align-items: center;
    width: 208px;
    height: 64px;
    padding-left: 13px;
    border: 2px solid #e6e8f0;
    border-radius: 14px;
    box-shadow: 0 2px 3px rgba(40, 50, 90, 0.08);
    font-size: 27.6px;
    font-weight: 500;
    white-space: nowrap;
}

.upload svg {
    width: 22px;
    height: 26px;
    margin-right: 8px;
    fill: none;
    stroke: #000;
    stroke-width: 2.2;
    stroke-linecap: round;
}

/* Activity feed */
.activity {
    flex: 1;
    min-width: 0;
    height: 1820px;
    background: #f4f6f8;
    border-bottom-right-radius: 54px;
    overflow: hidden;
}

.tabs {
    display: flex;
    height: 104px;
    padding-left: 36px;
    background: #fff;
    border-bottom: 2px solid #e6e8f0;
}

.tab {
    display: flex;
    align-items: center;
    height: 102px;
    padding: 2px 32px 0;
    border-bottom: 4px solid transparent;
    font-size: 27.5px;
    font-weight: 500;
    color: #64788f;
}

.tab svg {
    width: 22px;
    height: 24px;
    margin-right: 14px;
    fill: currentColor;
}

.tab.active {
    width: 240px;
    padding-right: 0;
    color: #3b5bdb;
    border-color: #3b5bdb;
}

.feed {
    padding: 0 22px 0 40px;
}

.feed h3 {
    padding: 39px 0 17px;
    font-size: 27.3px;
    font-weight: 500;
    line-height: 40px;
    color: #101840;
}

.card + h3 {
    padding-top: 19px;
}

.card {
    display: flex;
    align-items: center;
    min-height: 80px;
    padding: 20px 40px 20px 39px;
    margin-bottom: 20px;
    border-radius: 8px;
    background: #fff;
    color: #474d66;
}

.card p {
    flex: 1;
    line-height: 40px;
    white-space: nowrap;
}

.card b {
    font-weight: 600;
    font-size: 28px;
    line-height: 1;
}

.send {
    width: 32px;
    height: 32px;
    margin-right: 30px;
    fill: #3366ff;
}

.booked {
    width: 30px;
    height: 30px;
    margin-right: 32px;
    fill: #52bd95;
}

.flag {
    width: 36px;
    height: 35px;
    margin: 0 3px 0 1px;
    vertical-align: -7px;
}

.badge {
    height: 32px;
    padding: 0 11px;
    margin-right: 30px;
    border-radius: 8px;
    background: #e7e4f9;
    color: #6e62b6;
    font-size: 22.2px;
    font-weight: 600;
    line-height: 32px;
    letter-spacing: 1.1px;
}

.badge.paid {
    margin-right: 20px;
}

.badge.active {
    margin-right: 28px;
}

.badge.paid,
.badge.active {
    background: #dcf2ea;
    color: #317159;
}

.card time {
    width: 72px;
    font-size: 28px;
    text-align: right;
    white-space: nowrap;
}

/* Dropdown menu */
.menu {
    position: absolute;
    left: 2362px;
    top: 194px;
    width: 400px;
    height: 288px;
    padding-top: 17px;
    border-radius: 8px;
    background: #fff;
    box-shadow: 0 0 2px rgba(67, 90, 111, 0.35), 0 10px 20px -2px rgba(67, 70, 111, 0.4);
    color: #474d66;
}

.menu-item {
    display: flex;
    align-items: center;
    height: 80px;
    padding-left: 56px;
}

.menu-item svg {
    width: 32px;
    height: 32px;
    margin-right: 24px;
    fill: none;
    stroke: #696f8c;
    stroke-width: 4.2;
}

.menu-title {
    margin: 50px 0 15px;
    padding-left: 32px;
    font-size: 19.5px;
    font-weight: 500;
    line-height: 30px;
    letter-spacing: 1.8px;
    color: #696f8c;
}

.menu-item.danger {
    color: #d14343;
}

.menu-item.danger svg {
    fill: #d14343;
    stroke: none;
}

.arrows {
    position: absolute;
    left: 2700px;
    top: 0;
    width: 220px;
    height: 300px;
    fill: none;
    stroke: #007aff;
    stroke-width: 22;
    stroke-linecap: round;
    stroke-linejoin: round;
    filter: drop-shadow(0 3px 5px rgba(30, 40, 90, 0.3));
}
```
